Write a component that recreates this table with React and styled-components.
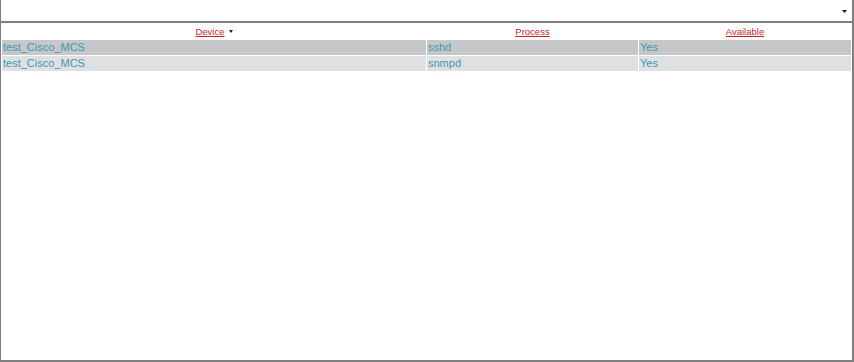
import React from 'react';
import styled, { createGlobalStyle } from 'styled-components';

const GlobalStyle = createGlobalStyle`
  html, body {
    margin: 0;
    padding: 0;
    background: #fff;
  }
  body {
    font-family: "Liberation Sans", Arial, sans-serif;
  }
`;

const Frame = styled.div`
  box-sizing: border-box;
  width: 854px;
  height: 362px;
  border-left: 1px solid #7d807f;
  border-right: 2px solid #7d807f;
  border-bottom: 2px solid #7d807f;
  background: #fff;
  display: flex;
  flex-direction: column;
`;

const Toolbar = styled.div`
  height: 21px;
  border-bottom: 2px solid #7d807f;
  display: flex;
  align-items: center;
  justify-content: flex-end;
  padding-right: 5px;
`;

const DropArrow = styled.svg`
  display: block;
  margin-top: 2px;
`;

const Grid = styled.table`
  width: 100%;
  border-collapse: separate;
  border-spacing: 1px;
  table-layout: fixed;
  font-size: 11px;
`;

const HeadCell = styled.th`
  height: 15px;
  padding: 0;
  font-weight: normal;
  font-size: 9.5px;
  text-align: center;
  vertical-align: middle;
`;

const SortLink = styled.span`
  color: #cc1f1f;
  text-decoration: underline;
`;

const SortMark = styled.span`
  display: inline-block;
  width: 0;
  height: 0;
  margin-left: 4px;
  vertical-align: 2px;
  border-left: 2px solid transparent;
  border-right: 2px solid transparent;
  border-top: 3px solid #222;
`;

const Row = styled.tr`
  background: ${p => (p.$alt ? '#dfe0e2' : '#c6c7c8')};
`;

const Cell = styled.td`
  height: 15px;
  padding: 0 0 0 1px;
  color: #3f97b6;
  line-height: 15px;
  white-space: nowrap;
  overflow: hidden;
`;

const columns = [
  { key: 'device', label: 'Device', width: 424, sorted: true },
  { key: 'process', label: 'Process', width: 211 },
  { key: 'available', label: 'Available', width: 212 },
];

const rows = [
  { id: 1, device: 'test_Cisco_MCS', process: 'sshd', available: 'Yes' },
  { id: 2, device: 'test_Cisco_MCS', process: 'snmpd', available: 'Yes' },
];

export default function App() {
  return (
    <>
      <GlobalStyle />
      <Frame>
        <Toolbar>
          <DropArrow width="5" height="3" viewBox="0 0 5 3">
            <polygon points="0,0 5,0 2.5,3" fill="#111a2a" />
          </DropArrow>
        </Toolbar>
        <Grid>
          <colgroup>
            {columns.map(c => (
              <col key={c.key} style={{ width: c.width }} />
            ))}
          </colgroup>
          <thead>
            <tr>
              {columns.map(c => (
                <HeadCell key={c.key}>
                  <SortLink>{c.label}</SortLink>
                  {c.sorted && <SortMark />}
                </HeadCell>
              ))}
            </tr>
          </thead>
          <tbody>
            {rows.map((r, i) => (
              <Row key={r.id} $alt={i % 2 === 1}>
                {columns.map(c => (
                  <Cell key={c.key}>{r[c.key]}</Cell>
                ))}
              </Row>
            ))}
          </tbody>
        </Grid>
      </Frame>
    </>
  );
}
